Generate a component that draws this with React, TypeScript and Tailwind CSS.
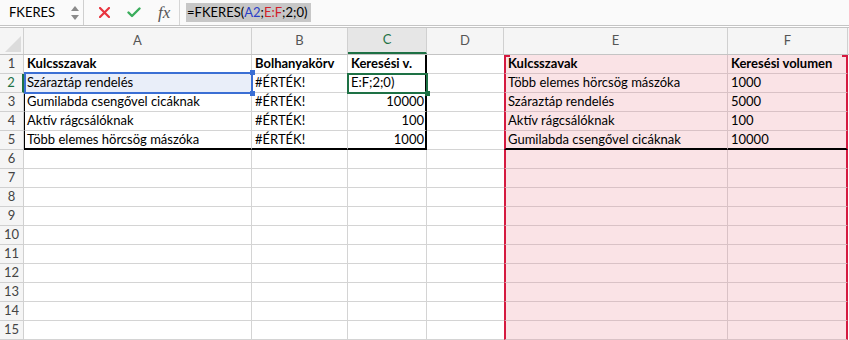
import { FC } from 'react';

const cols = [
  { key: 'A', w: 228 },
  { key: 'B', w: 96 },
  { key: 'C', w: 79 },
  { key: 'D', w: 77 },
  { key: 'E', w: 224 },
  { key: 'F', w: 120 },
];

type Cell = { t?: string; bold?: boolean; right?: boolean };

const data: Record<number, Record<string, Cell>> = {
  1: {
    A: { t: 'Kulcsszavak', bold: true },
    B: { t: 'Bolhanyakörv', bold: true },
    C: { t: 'Keresési v.', bold: true },
    E: { t: 'Kulcsszavak', bold: true },
    F: { t: 'Keresési volumen', bold: true },
  },
  2: {
    A: { t: 'Száraztáp rendelés' },
    B: { t: '#ÉRTÉK!' },
    C: { t: 'E:F;2;0)' },
    E: { t: 'Több elemes hörcsög mászóka' },
    F: { t: '1000' },
  },
  3: {
    A: { t: 'Gumilabda csengővel cicáknak' },
    B: { t: '#ÉRTÉK!' },
    C: { t: '10000', right: true },
    E: { t: 'Száraztáp rendelés' },
    F: { t: '5000' },
  },
  4: {
    A: { t: 'Aktív rágcsálóknak' },
    B: { t: '#ÉRTÉK!' },
    C: { t: '100', right: true },
    E: { t: 'Aktív rágcsálóknak' },
    F: { t: '100' },
  },
  5: {
    A: { t: 'Több elemes hörcsög mászóka' },
    B: { t: '#ÉRTÉK!' },
    C: { t: '1000', right: true },
    E: { t: 'Gumilabda csengővel cicáknak' },
    F: { t: '10000' },
  },
};

const rows = Array.from({ length: 15 }, (_, i) => i + 1);

// border / fill of one cell, the table outlines live in the cell borders
const cellClass = (r: number, key: string, cell?: Cell) => {
  const pink = key === 'E' || key === 'F';
  let cls = 'relative flex items-center overflow-hidden whitespace-nowrap border-r border-b px-[3px] ';
  cls += pink ? 'border-[#d9c2c6] bg-[#fae3e6] ' : 'border-[#d4d4d4] ';
  if (r === 2 && key === 'A') cls += 'bg-[#e9eef9] ';
  if (key === 'D') cls += 'border-r-0 ';
  if (key === 'E') cls += 'border-l-2 border-l-[#d51a40] pl-[2px] ';
  if (key === 'F') cls += 'border-r-2 border-r-[#d51a40] ';
  if (key === 'C' && r <= 5) cls += 'border-r-2 border-r-black ';
  if (key === 'A' && r >= 3 && r <= 5) cls += 'border-l border-l-black pl-[2px] ';
  if (r === 5 && key !== 'D') cls += 'border-b-2 border-b-black ';
  if (cell?.right) cls += 'justify-end pr-[1px] ';
  if (cell?.bold) cls += 'font-bold ';
  return cls;
};

const Toolbar: FC = () => (
  <div className="flex h-[26px] items-stretch border-b border-[#c4c4c4] bg-[#fafafa]">
    <div className="flex w-[84px] items-center justify-between border-r border-[#cfcfcf] pl-[9px] pr-[4px]">
      <span className="text-[13px] text-black">FKERES</span>
      <div className="flex flex-col gap-[4px]">
        <svg width="8" height="5" viewBox="0 0 8 5">
          <path d="M4 0 L8 5 L0 5 Z" fill="#8a8a8a" />
        </svg>
        <svg width="8" height="5" viewBox="0 0 8 5">
          <path d="M0 0 L8 0 L4 5 Z" fill="#8a8a8a" />
        </svg>
      </div>
    </div>
    <div className="flex w-[96px] items-center border-r border-[#d6d6d6] pl-[15px]">
      <svg width="11" height="11" viewBox="0 0 11 11" className="mr-[17px]">
        <path d="M1 1 L10 10 M10 1 L1 10" stroke="#e8343f" strokeWidth="2.2" strokeLinecap="round" />
      </svg>
      <svg width="14" height="11" viewBox="0 0 14 11" className="mr-[17px]">
        <path d="M1.5 5.5 L5 9 L12.5 1.5" stroke="#3aad5c" strokeWidth="2.4" fill="none" strokeLinecap="round" strokeLinejoin="round" />
      </svg>
      <span className="font-['Liberation_Serif',serif] text-[17px] italic leading-none text-[#555]">fx</span>
    </div>
    <div className="flex items-center pl-[6px]">
      <div className="flex h-[19px] items-center bg-[#c7c7c7] pl-[1px] pr-[4px] text-[13px] text-black">
        =FKERES(<span className="text-[#2b3fc7]">A2</span>;<span className="text-[#d0202a]">E:F</span>;2;0)
      </div>
    </div>
  </div>
);

const App: FC = () => {
  return (
    <div className="h-[340px] w-[849px] overflow-hidden bg-white font-['Lato',sans-serif] text-[13px] text-black">
      <Toolbar />
      <div className="h-[1px] bg-white" />
      {/* column headers */}
      <div className="flex h-[28px] border-y border-[#c4c4c4] bg-[#f5f5f5]">
        <div className="flex w-[24px] items-end justify-end border-r border-[#d0d0d0] p-[2px]">
          <svg width="16" height="16" viewBox="0 0 16 16">
            <path d="M16 0 L16 16 L0 16 Z" fill="#dcdcdc" />
          </svg>
        </div>
        {cols.map((c) => (
          <div
            key={c.key}
            className={
              c.key === 'C'
                ? 'flex items-center justify-center border-r border-b-2 border-[#d0d0d0] border-b-[#1e7145] bg-[#e6e6e6] text-[#1e7145]'
                : 'flex items-center justify-center border-r border-[#d0d0d0] text-[#555]'
            }
            style={{ width: c.w }}
          >
            {c.key}
          </div>
        ))}
      </div>

      {/* grid */}
      <div className="relative">
        {rows.map((r) => (
          <div key={r} className="flex h-[19px]">
            <div
              className={
                r === 2
                  ? 'flex w-[24px] items-center justify-center border-r-2 border-b border-[#d0d0d0] border-r-[#1e7145] bg-[#f5f5f5] text-[#1e7145]'
                  : 'flex w-[24px] items-center justify-center border-r border-b border-[#d0d0d0] bg-[#f5f5f5] text-[#444]'
              }
            >
              {r}
            </div>
            {cols.map((c) => {
              const cell = data[r]?.[c.key];
              return (
                <div key={c.key} className={cellClass(r, c.key, cell)} style={{ width: c.w }}>
                  {r === 1 && c.key === 'E' && (
                    <span className="absolute left-0 top-0 h-[2px] w-[4px] bg-[#d51a40]" />
                  )}
                  {r === 1 && c.key === 'F' && (
                    <span className="absolute right-0 top-0 h-[2px] w-[4px] bg-[#d51a40]" />
                  )}
                  {cell?.t}
                </div>
              );
            })}
          </div>
        ))}

        {/* A2 selection */}
        <div className="pointer-events-none absolute left-[24px] top-[17px] h-[22px] w-[229px] border-2 border-[#3b6fd4]">
          <span className="absolute -right-[4px] -top-[4px] h-[5px] w-[5px] bg-[#3b6fd4]" />
          <span className="absolute -bottom-[4px] -right-[4px] h-[5px] w-[5px] bg-[#3b6fd4]" />
        </div>

        {/* C2 edit cell */}
        <div className="pointer-events-none absolute left-[347px] top-[18px] h-[21px] w-[81px] border-2 border-[#1e7145]">
          <span className="absolute -bottom-[4px] -right-[4px] h-[5px] w-[5px] bg-[#1e7145]" />
        </div>
      </div>
    </div>
  );
};

export default App;
